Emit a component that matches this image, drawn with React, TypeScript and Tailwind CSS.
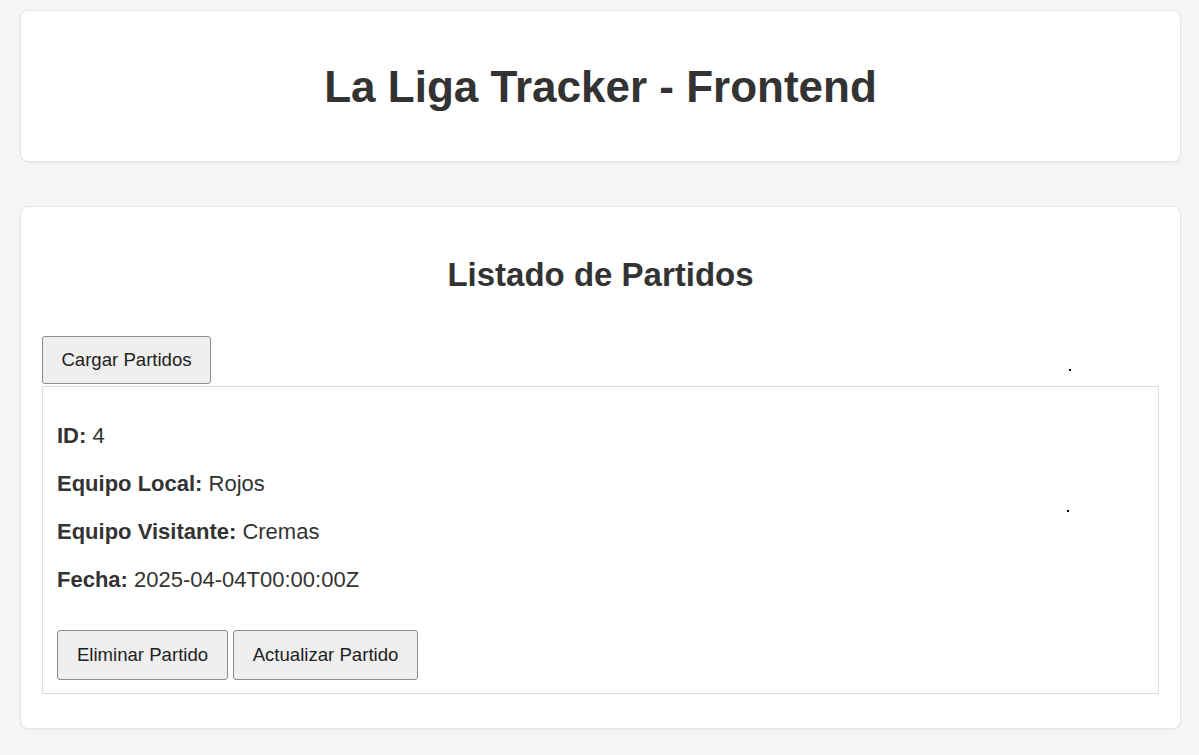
import React from "react";

const partido = {
  id: 4,
  local: "Rojos",
  visitante: "Cremas",
  fecha: "2025-04-04T00:00:00Z",
};

function Boton({ label, className }: { label: string; className: string }) {
  return (
    <button
      className={`bg-[#efefef] border border-[#8d8d8d] rounded-[3px] text-[18.6px] text-[#222] leading-none flex items-center justify-center ${className}`}
    >
      {label}
    </button>
  );
}

function App() {
  const rows = [
    { label: "ID:", value: String(partido.id) },
    { label: "Equipo Local:", value: partido.local },
    { label: "Equipo Visitante:", value: partido.visitante },
    { label: "Fecha:", value: partido.fecha },
  ];

  return (
    <div
      className="min-h-[755px] bg-[#f5f5f5] pl-[20px] pr-[18px] pt-[10px] text-[#333]"
      style={{ fontFamily: '"Liberation Sans", Arial, sans-serif' }}
    >
      <div className="h-[152px] bg-white border border-[#e6e6e6] rounded-[8px] shadow-[0_1px_2px_rgba(0,0,0,0.05)] flex items-center justify-center">
        <h1 className="text-[44px] font-bold leading-none text-[#333] pt-[2px]">
          La Liga Tracker - Frontend
        </h1>
      </div>

      <div className="relative mt-[44px] h-[523px] bg-white border border-[#e6e6e6] rounded-[8px] shadow-[0_1px_2px_rgba(0,0,0,0.05)] px-[21px] pt-[49px]">
        <h2 className="text-[33px] font-bold leading-[38px] text-center text-[#333]">
          Listado de Partidos
        </h2>

        <div className="mt-[42px]">
          <Boton label="Cargar Partidos" className="w-[169px] h-[48px]" />
        </div>

        <div className="mt-[2px] border border-[#dcdcdc] pl-[14px] pt-[35px] pb-[13px] h-[308px]">
          <div className="flex flex-col gap-[20px]">
            {rows.map((r) => (
              <p key={r.label} className="text-[22px] leading-[28px] text-[#333]">
                <strong className="font-bold">{r.label}</strong> {r.value}
              </p>
            ))}
          </div>
          <div className="mt-[36px] flex gap-[5px]">
            <Boton label="Eliminar Partido" className="w-[171px] h-[50px]" />
            <Boton label="Actualizar Partido" className="w-[185px] h-[50px]" />
          </div>
        </div>

        <span className="absolute left-[1048px] top-[162px] w-[2px] h-[2px] bg-black" />
        <span className="absolute left-[1046px] top-[303px] w-[2px] h-[2px] bg-black" />
      </div>
    </div>
  );
}

export default App;
